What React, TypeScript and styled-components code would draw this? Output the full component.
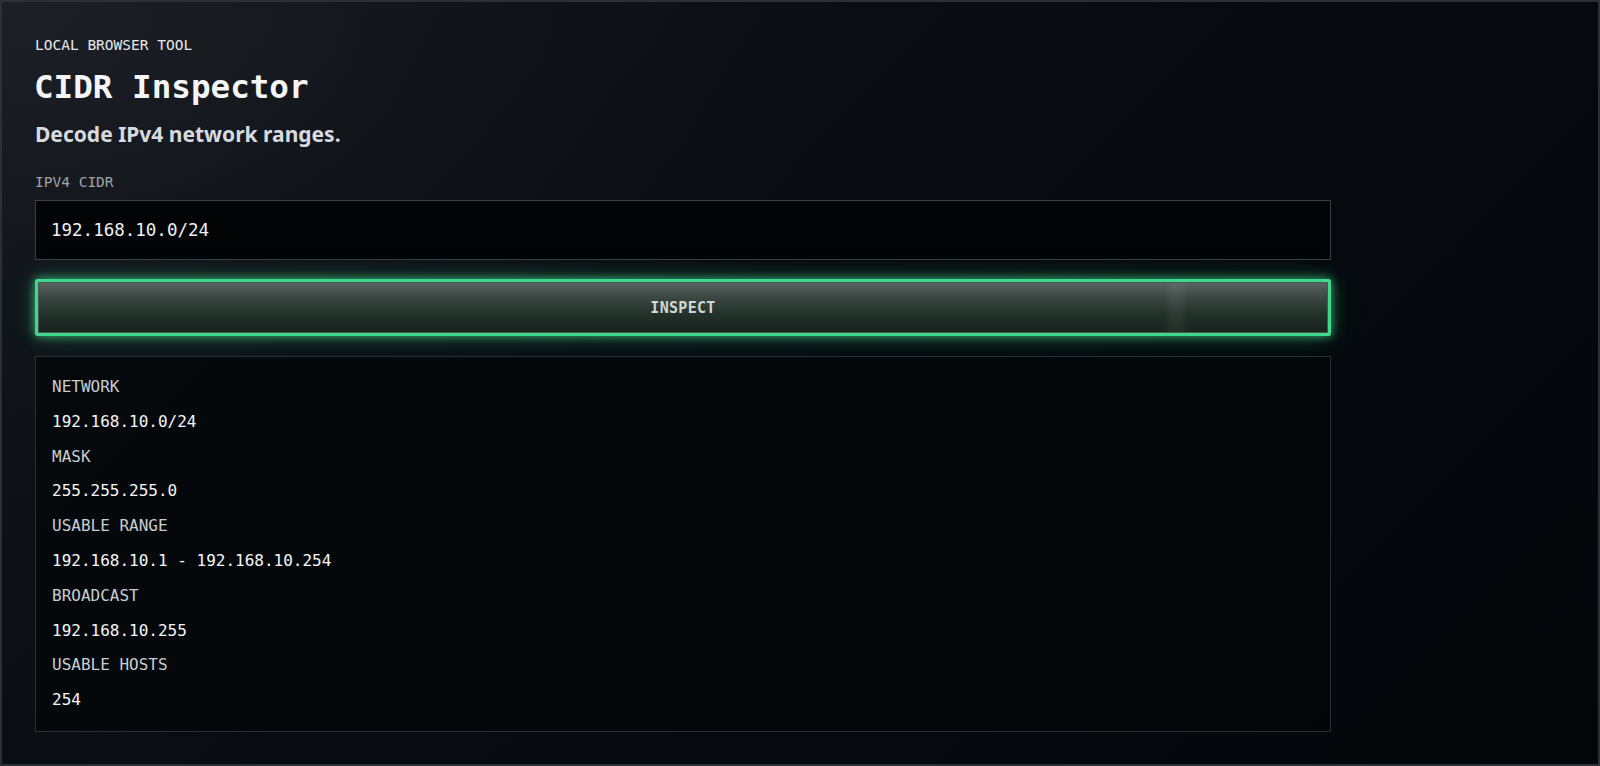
import React, { useState } from "react";
import styled, { createGlobalStyle } from "styled-components";

const GlobalStyle = createGlobalStyle`
  html, body { margin: 0; padding: 0; height: 100%; background: #05080c; }
  #root { height: 100%; }
  * { box-sizing: border-box; }
`;

const MONO = `"DejaVu Sans Mono", "Liberation Mono", monospace`;
const SANS = `"Noto Sans", "Open Sans", sans-serif`;

const Page = styled.div`
  height: 100vh;
  border: 2px solid #2b3036;
  background:
    radial-gradient(ellipse 70% 90% at 0% 0%, rgba(30, 34, 40, 0.85) 0%, rgba(20, 24, 30, 0.4) 45%, rgba(0, 0, 0, 0) 75%),
    linear-gradient(135deg, #12161b 0%, #080c11 45%, #03070a 100%);
  padding: 33px 0 0 33px;
  overflow: hidden;
`;

const Main = styled.main`
  width: 1296px;
  display: flex;
  flex-direction: column;
`;

const Eyebrow = styled.div`
  font-family: ${MONO};
  font-size: 14.5px;
  line-height: 20px;
  color: #e6e8ea;
`;

const Title = styled.h1`
  margin: 12px 0 0 -1px;
  font-family: ${MONO};
  font-weight: 700;
  font-size: 32.6px;
  line-height: 40px;
  color: #f4f5f6;
`;

const Subtitle = styled.p`
  margin: 13px 0 0;
  font-family: ${SANS};
  font-weight: 700;
  font-size: 21px;
  line-height: 28px;
  color: #d7dbe0;
`;

const FieldLabel = styled.label`
  margin-top: 24px;
  font-family: ${MONO};
  font-size: 14.5px;
  line-height: 20px;
  color: #9ea3a9;
`;

const Input = styled.input`
  margin-top: 8px;
  height: 60px;
  width: 100%;
  border: 1px solid #3a3f45;
  background: #020406;
  color: #eef0f2;
  font-family: ${MONO};
  font-size: 17.5px;
  padding: 0 15px;
  outline: none;
  border-radius: 0;
`;

const Button = styled.button`
  position: relative;
  margin-top: 19px;
  height: 57px;
  width: 100%;
  border: 3px solid #40d88d;
  border-radius: 2px;
  background: linear-gradient(180deg, #5b6561 0%, #3a4742 30%, #22302a 65%, #17221d 100%);
  box-shadow:
    0 0 8px rgba(64, 216, 141, 0.7),
    0 0 18px rgba(64, 216, 141, 0.3),
    0 0 34px rgba(64, 216, 141, 0.12),
    inset 0 0 0 1px #4b5652;
  color: #d0d6d3;
  font-family: ${MONO};
  font-weight: 700;
  font-size: 15px;
  letter-spacing: 0.3px;
  cursor: pointer;
  overflow: hidden;

  &::after {
    content: "";
    position: absolute;
    top: 1px;
    bottom: 1px;
    left: 1125px;
    width: 26px;
    background: linear-gradient(90deg, rgba(255,255,255,0) 0%, rgba(255,255,255,0.05) 40%, rgba(255,255,255,0.05) 60%, rgba(255,255,255,0) 100%);
    pointer-events: none;
  }
`;

const Results = styled.dl`
  margin: 20px 0 0;
  height: 376px;
  border: 1px solid #2a2f34;
  background: linear-gradient(135deg, #06090c 0%, #030609 100%);
  padding: 18px 16px 20px;
  display: grid;
  grid-auto-rows: 24px;
  row-gap: 10.8px;
  align-content: start;
`;

const Term = styled.dt`
  font-family: ${MONO};
  font-size: 16px;
  line-height: 24px;
  color: #c9cdd1;
`;

const Value = styled.dd`
  margin: 0;
  font-family: ${MONO};
  font-size: 16px;
  line-height: 24px;
  color: #f5f6f7;
  font-weight: 500;
`;

const rows: [string, string][] = [
  ["NETWORK", "192.168.10.0/24"],
  ["MASK", "255.255.255.0"],
  ["USABLE RANGE", "192.168.10.1 - 192.168.10.254"],
  ["BROADCAST", "192.168.10.255"],
  ["USABLE HOSTS", "254"],
];

export default function App() {
  const [cidr, setCidr] = useState("192.168.10.0/24");
  return (
    <>
      <GlobalStyle />
      <Page>
        <Main>
          <Eyebrow>LOCAL BROWSER TOOL</Eyebrow>
          <Title>CIDR Inspector</Title>
          <Subtitle>Decode IPv4 network ranges.</Subtitle>
          <FieldLabel htmlFor="cidr">IPV4 CIDR</FieldLabel>
          <Input id="cidr" value={cidr} onChange={(e) => setCidr(e.target.value)} />
          <Button type="button">INSPECT</Button>
          <Results>
            {rows.map(([k, v]) => (
              <React.Fragment key={k}>
                <Term>{k}</Term>
                <Value>{v}</Value>
              </React.Fragment>
            ))}
          </Results>
        </Main>
      </Page>
    </>
  );
}
